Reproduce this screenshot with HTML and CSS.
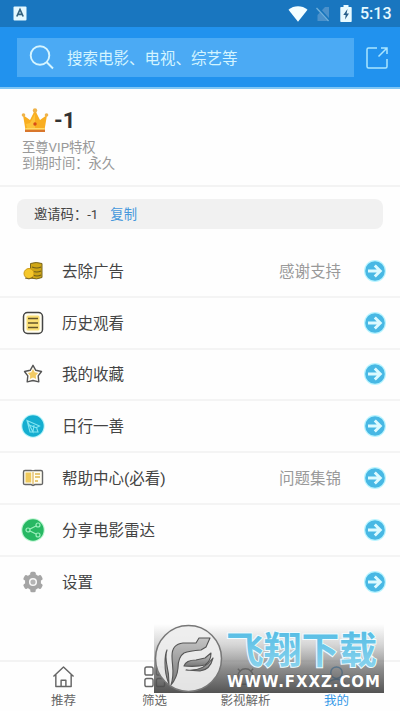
FILE: index.html
```html
<!DOCTYPE html>
<html lang="zh-CN">
<head>
<meta charset="utf-8">
<title>我的</title>
<link rel="stylesheet" href="styles.css">
</head>
<body>
<svg class="defs" width="0" height="0">
  <symbol id="arrow" viewBox="0 0 22 22">
    <circle cx="11" cy="11" r="11" fill="#b9f4ff"/>
    <circle cx="11" cy="11" r="9.8" fill="#48b8e4"/>
    <path d="M4 11h12M10.8 5.5l5.5 5.5-5.5 5.5" fill="none" stroke="#dcfaff" stroke-width="2.9"/>
  </symbol>
</svg>
<div class="screen">
  <header class="status">
    <svg class="app-badge" viewBox="0 0 14 15"><rect x=".5" y=".5" width="13" height="14" rx="1" fill="#e4f8ff"/><path d="M3.8 10.5 7 3.5l3.2 7M5 8.3h4" fill="none" stroke="#35637f" stroke-width="1.7"/></svg>
    <div class="status-right">
      <svg width="20" height="16" viewBox="0 0 20 16"><path d="M.5 3.8C6-.8 14-.8 19.5 3.8L10 15.7z" fill="#f4feff"/></svg>
      <svg width="14" height="16" viewBox="0 0 14 16"><path d="M13 1v14H1.500V9L9 1z" fill="#4b91cb"/><path d="M1 1l12.500 14" stroke="#1976bd" stroke-width="3"/><path d="M.5 2l12 13" stroke="#70b0dc" stroke-width="1.300"/></svg>
      <svg width="12" height="17" viewBox="0 0 12 17"><path d="M3.500 0h5v2H11a.7.7 0 0 1 .7.7v13.500a.7.7 0 0 1-.7.7H1a.7.7 0 0 1-.7-.7V2.700A.7.7 0 0 1 1 2h2.500z" fill="#e8faff"/><path d="M7.500 4 3.300 10h2.400L5 14.500 9 8.500H6.600z" fill="#285f8a"/></svg>
      <span class="clock">5:13</span>
    </div>
  </header>
  <div class="topbar">
    <div class="search">
      <svg width="26" height="26" viewBox="0 0 26 26" fill="none" stroke="#d5f5ff" stroke-width="1.900"><circle cx="11" cy="10.500" r="9.300"/><path d="M17.500 17l6.500 6.500"/></svg>
      <span>搜索电影、电视、综艺等</span>
    </div>
    <svg class="open" viewBox="0 0 24 24" fill="none" stroke="#a9e6ff" stroke-width="1.500"><path d="M12 2H3.500Q2 2 2 3.500v17Q2 22 3.500 22h17q1.500 0 1.500-1.500V13"/><path d="M13.500 10.500 22 2M16 2h6v6"/></svg>
  </div>
  <section class="profile">
    <div class="name">
      <svg width="28" height="28" viewBox="0 0 28 28">
        <path d="M2 8l7 5 5-10 5 10 7-5-2.500 15h-19z" fill="#f9ae20"/>
        <path d="M5 17l4-1 5-9v14H6z" fill="#fcc33a"/>
        <path d="M4 22.500h20v2.500H4z" fill="#d9772c"/><path d="M4.500 21h19v1.500h-19z" fill="#ffda66"/>
        <circle cx="2.500" cy="8" r="1.800" fill="#efb34a"/><circle cx="14" cy="3.500" r="2.200" fill="#efb34a"/><circle cx="25.500" cy="8" r="1.800" fill="#efb34a"/><circle cx="14" cy="17" r="1.700" fill="#d84c16"/>
      </svg>
      <strong>-1</strong>
    </div>
    <p>至尊VIP特权</p>
    <p>到期时间：永久</p>
  </section>
  <div class="invite"><span>邀请码：-1</span><a>复制</a></div>
  <main class="menu">
    <div class="row">
      <svg class="icon" viewBox="0 0 24 24"><path d="M9.500 4.500Q15 2.500 21 4.500v14q-5 2.500-11.500.500z" fill="#cfa616" stroke="#79661f"/><path d="M11 8q5 2 9 0M11 12q5 2 9 0M12 16q4 2 8 0" fill="none" stroke="#6d5d1e" stroke-width="1.200"/><circle cx="8" cy="14.500" r="5" fill="#f5c72b" stroke="#cc9a16"/><path d="M4 19q4 2 8-.5" fill="none" stroke="#786326"/></svg>
      <span class="label">去除广告</span><span class="note">感谢支持</span><svg class="go"><use href="#arrow"/></svg>
    </div>
    <div class="row">
      <svg class="icon" viewBox="0 0 24 24"><rect x="2.500" y="1.500" width="19" height="21" rx="4" fill="#fffdf0" stroke="#444" stroke-width="1.500"/><rect x="5.500" y="4.500" width="13" height="15" rx="1.500" fill="#fbdf75"/><path d="M7 7.500h10M7 12h10M7 16.500h10" stroke="#65552a" stroke-width="1.500"/></svg>
      <span class="label">历史观看</span><svg class="go"><use href="#arrow"/></svg>
    </div>
    <div class="row">
      <svg class="icon" viewBox="0 0 24 24"><path d="M12 3.300l2.800 5 5.700 1.200-3.300 4.400.6 6L12 18.500 6.200 19.900l.6-6L3.500 9.500l5.700-1.200z" fill="#fffdf6" stroke="#555" stroke-width="1.400" stroke-linejoin="round"/><path d="M12 7l1.700 3.200 3.500.7-2.400 2.600.3 3.500-3.100-1.500L8.900 17l.3-3.500-2.400-2.600 3.500-.7z" fill="#f2cb64"/></svg>
      <span class="label">我的收藏</span><svg class="go"><use href="#arrow"/></svg>
    </div>
    <div class="row">
      <svg class="icon" viewBox="0 0 24 24"><circle cx="12" cy="12" r="11.800" fill="#b7f4fa"/><circle cx="12" cy="12" r="10.700" fill="#15aed0"/><path d="M6 6.500 18.500 12l-3 1.500L17 18H9zM6 6.500l6 11.500 1-7M8 11l8 3" fill="none" stroke="#82e5f2" stroke-width="1.100"/></svg>
      <span class="label">日行一善</span><svg class="go"><use href="#arrow"/></svg>
    </div>
    <div class="row">
      <svg class="icon" viewBox="0 0 24 24"><path d="M2.500 6q0-1.500 1.500-1.500h6q2 0 2 .8 0-.8 2-.8h6q1.500 0 1.500 1.500v11.500q0 1-1.500 1h-6l-2 1-2-1H4q-1.500 0-1.500-1z" fill="#fffdf0" stroke="#666" stroke-width="1.400"/><path d="M4.500 6.500h5.700v10H4.500z" fill="#efc95c"/><path d="M12 6v12" stroke="#d7a33d"/><path d="M14 8h5M14 11h5M14 15h3" stroke="#e1b74d" stroke-width="1.300"/></svg>
      <span class="label">帮助中心(必看)</span><span class="note">问题集锦</span><svg class="go"><use href="#arrow"/></svg>
    </div>
    <div class="row">
      <svg class="icon" viewBox="0 0 24 24"><circle cx="12" cy="12" r="11.800" fill="#bdf6d2"/><circle cx="12" cy="12" r="10.700" fill="#27b863"/><g fill="none" stroke="#9cf0bd" stroke-width="1.200"><path d="M9 11l6-3M9 13l6 3"/><circle cx="7" cy="12" r="2"/><circle cx="17" cy="7" r="2"/><circle cx="17" cy="17" r="2"/></g></svg>
      <span class="label">分享电影雷达</span><svg class="go"><use href="#arrow"/></svg>
    </div>
    <div class="row">
      <svg class="icon" viewBox="0 0 24 24"><g fill="#a5a5a5"><circle cx="12" cy="12" r="8"/><rect x="9.300" y="1.800" width="5.400" height="20.400" rx="1.500"/><rect x="9.300" y="1.800" width="5.400" height="20.400" rx="1.500" transform="rotate(60 12 12)"/><rect x="9.300" y="1.800" width="5.400" height="20.400" rx="1.500" transform="rotate(120 12 12)"/></g><circle cx="12" cy="12" r="3.300" fill="#b5b5b5" stroke="#f8f8f8" stroke-width="1.500"/></svg>
      <span class="label">设置</span><svg class="go"><use href="#arrow"/></svg>
    </div>
  </main>
  <nav class="tabs">
    <div class="tab"><svg viewBox="0 0 24 24"><path d="M1.500 12 12 2l10.500 10M4 10v12.500h16V10M9.500 22.500V16h5v6.500"/></svg><span>推荐</span></div>
    <div class="tab"><svg viewBox="0 0 24 24"><rect x="2" y="2" width="8.500" height="8.500" rx="2"/><rect x="14" y="2" width="8.500" height="8.500" rx="2"/><rect x="2" y="14" width="8.500" height="8.500" rx="2"/><rect x="14" y="14" width="8.500" height="8.500" rx="2"/></svg><span>筛选</span></div>
    <div class="tab"><svg viewBox="0 0 24 24"><path d="M4 20V12a8 8 0 0 1 16 0v8zM7 7 4 4M17 7l3-3"/></svg><span>影视解析</span></div>
    <div class="tab active"><svg viewBox="0 0 24 24"><circle cx="12" cy="8" r="6"/><path d="M2 22q2-7 10-7t10 7"/></svg><span>我的</span></div>
  </nav>
  <svg class="watermark" viewBox="0 0 230 69">
    <defs>
      <linearGradient id="shade" x2="0" y2="1"><stop stop-color="#777" stop-opacity="0"/><stop offset=".3" stop-color="#777" stop-opacity=".3"/><stop offset=".65" stop-color="#666" stop-opacity=".75"/><stop offset="1" stop-color="#444" stop-opacity=".92"/></linearGradient>
      <linearGradient id="wing" x2="0" y2="1"><stop stop-color="#c4c4c4"/><stop offset="1" stop-color="#777"/></linearGradient>
      <linearGradient id="sky" x2="0" y2="1"><stop stop-color="#48b7e2"/><stop offset="1" stop-color="#93d7ef"/></linearGradient>
    </defs>
    <rect width="230" height="69" fill="url(#shade)"/>
    <circle cx="34.500" cy="34.500" r="33" fill="#eee" fill-opacity=".93" stroke="#777" stroke-width="1.500"/>
    <g fill="url(#wing)" stroke="#555" stroke-width="1.100" stroke-linejoin="round">
      <path d="M17 61Q23 54 24 44Q24 33 30 29Q35 27 47 26L52 23 56 14 45 14 42 19 29 19Q18 20 18 32C18 43 21 49 17 61z"/>
      <path d="M13 26Q11 31 13 42 15 50 15 60 11 51 11 39 11 30 13 26z"/>
      <path d="M30 42Q32 36 42 36L51 34 57 29Q57 37 51 41 43 43 30 42z"/>
      <path d="M32 46Q49 48 59 34 56 46 46 47z"/>
    </g>
    <text class="wm-title" x="72" y="40" textLength="151" lengthAdjust="spacingAndGlyphs">飞翔下载</text>
    <text class="wm-url" x="73" y="63" textLength="153" lengthAdjust="spacing">WWW.FXXZ.COM</text>
  </svg>
</div>
</body>
</html>
```
FILE: styles.css
```css
* { box-sizing: border-box; }
body { margin: 0; background: #fff; font-family: Roboto, "Noto Sans CJK SC", sans-serif; }
svg { display: block; flex: none; }
.defs { position: absolute; }
.screen { position: relative; width: 400px; height: 711px; display: flex; flex-direction: column; overflow: hidden; background: #fefefe; }
.status { height: 27px; flex: none; background: #1976bf; display: flex; align-items: center; justify-content: space-between; padding: 0 9px 0 13px; }
.app-badge { width: 14px; height: 15px; }
.status-right { display: flex; align-items: center; gap: 8px; }
.status-right svg:nth-child(3) { margin-left: 2px; }
.clock { color: #e5faff; font-size: 16px; line-height: 20px; font-weight: 500; width: 31px; margin-top: 1px; white-space: nowrap; }
.topbar { height: 62px; flex: none; background: #2192ee; border-bottom: 2px solid #7fc6f5; display: flex; align-items: center; padding: 0 11px 0 17px; justify-content: space-between; }
.search { width: 337px; height: 39px; margin-top: 1px; background: #4baaf4; display: flex; align-items: center; padding-left: 12px; gap: 12px; color: #d3f4ff; font-size: 15.500px; line-height: 20px; }
.search span { padding-top: 2px; }
.open { width: 24px; height: 24px; margin-top: 1px; }
.profile { height: 98px; flex: none; border-bottom: 2px solid #f3f3f3; padding: 18px 0 0 22px; }
.name { display: flex; align-items: center; height: 28px; gap: 5px; color: #333; font-size: 22px; line-height: 28px; }
.name svg { margin-left: -1px; }
.profile p { margin: 0; color: #999; font-size: 13.300px; line-height: 16px; }
.name + p { margin-top: 5px; }
.invite { height: 30px; flex: none; margin: 12px 17px 17px; padding: 2px 0 0 17px; border-radius: 8px; background: #f1f1f1; display: flex; align-items: center; gap: 12px; color: #444; font-size: 13.300px; line-height: 18px; }
.invite a { color: #4598dc; }
.menu { flex: none; height: 414px; }
.row { height: 51.800px; display: flex; align-items: center; padding: 0 14px 0 21px; border-bottom: 2px solid #f4f4f4; }
.row:last-child { border: 0; height: 51px; }
.icon { width: 24px; height: 24px; }
.label { flex: 1; margin-left: 17px; padding-top: 2px; color: #444; font-size: 15.500px; line-height: 22px; }
.note { color: #999; padding-top: 2px; font-size: 15.500px; line-height: 22px; margin-right: 23px; }
.go { width: 22px; height: 22px; }
.tabs { height: 51px; flex: none; margin-top: auto; border-top: 2px solid #f3f3f3; display: flex; padding: 3px 18px 0; }
.tab { width: 91px; display: flex; flex-direction: column; align-items: center; color: #666; font-size: 12.500px; line-height: 16px; gap: 5px; }
.tab svg { width: 23px; height: 23px; fill: none; stroke: #666; stroke-width: 1.500; stroke-linejoin: round; }
.tab.active { color: #3498e8; }
.tab.active svg { stroke: #3498e8; }
.watermark { position: absolute; left: 154px; top: 624px; width: 230px; height: 69px; overflow: visible; }
.wm-title { font: 700 37px "Noto Sans CJK SC", sans-serif; fill: url(#sky); stroke: #effcff; stroke-width: 2px; paint-order: stroke; }
.wm-url { font: 700 15px "DejaVu Sans", sans-serif; fill: #fff; stroke: #666; stroke-width: 1px; paint-order: stroke; }
```
